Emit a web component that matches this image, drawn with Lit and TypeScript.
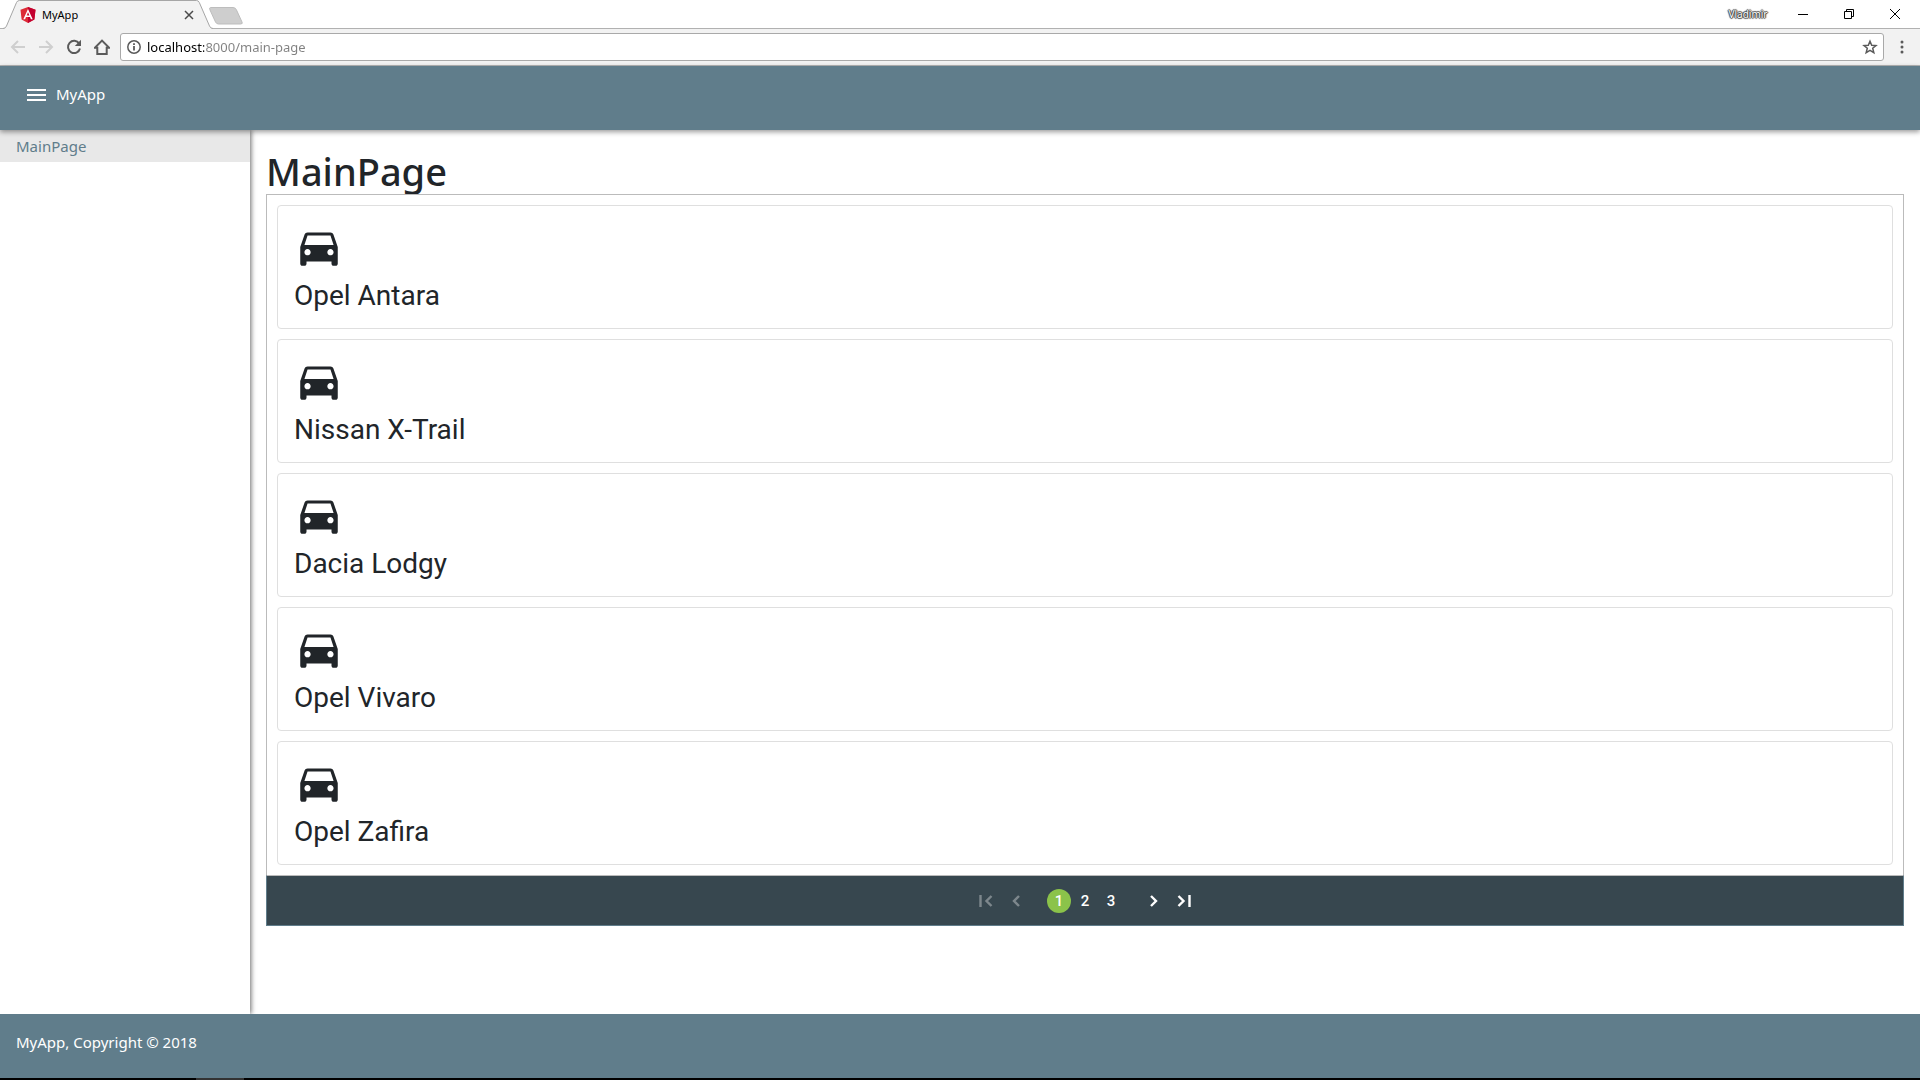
import { LitElement, html, css, svg } from "lit";
import { customElement, property, state } from "lit/decorators.js";
import { classMap } from "lit/directives/class-map.js";

const ui = css`
  :host { display: block; box-sizing: border-box; }
  *, *::before, *::after { box-sizing: border-box; }
  button { margin: 0; padding: 0; border: 0; background: none; color: inherit; font: inherit; cursor: pointer; display: flex; align-items: center; justify-content: center; }
  button:disabled { cursor: default; }
  svg { display: block; flex: none; }
`;

@customElement("browser-chrome")
class BrowserChrome extends LitElement {
  static styles = [ui, css`
    :host { font-family: "Noto Sans", "Open Sans", sans-serif; background: #f2f2f2; color: #5a5a5a; }
    .strip { display: flex; height: 29px; padding-right: 2px; background: #fff; border-bottom: 1px solid #b1b1b1; }
    .tab { position: relative; display: flex; align-items: center; width: 213px; height: 29px; padding: 0 15px 0 20px; gap: 6px; }
    .shape { position: absolute; left: 0; top: 0; }
    .logo, .title, .close { position: relative; }
    .title { flex: 1; font-size: 11px; line-height: 16px; color: #000; }
    .close { width: 18px; height: 18px; }
    .fresh { align-self: flex-start; height: 29px; margin-left: -7px; }
    .space { flex: 1; }
    .user { width: 64px; font-size: 10px; color: #fff; text-shadow: 0 0 1px #333, 0 0 1px #333, 1px 0 1px #555, -1px 0 1px #555, 0 1px 1px #555, 0 -1px 1px #555; }
    .win { width: 46px; color: #000; height: 27px; }
    .bar { display: flex; align-items: center; height: 37px; padding: 0 8px 0 4px; border-bottom: 1px solid #b6b6b6; }
    .nav { width: 28px; height: 28px; }
    .nav:disabled { color: #cfcfcf; }
    .box { flex: 1; display: flex; align-items: center; height: 28px; margin-left: 4px; padding: 0 5px 0 6px; gap: 6px; background: #fff; border: 1px solid #a9a9a9; border-radius: 3px; }
    .address { flex: 1; min-width: 0; height: 24px; padding: 0; border: 0; outline: 0; font: 13px/24px "Noto Sans", "Open Sans", sans-serif; color: #000; -webkit-text-fill-color: transparent; background: linear-gradient(to right, #000 57px, #808080 57px); -webkit-background-clip: text; background-clip: text; }
    .more { width: 20px; height: 28px; margin-left: 8px; }
  `];
  render() {
    return html`
      <div class="strip">
        <div class="tab">
          <svg class="shape" width="213" height="29" viewBox="0 0 213 29"><path d="M3 29Q5.500 28.500 6.500 26L16.500 2.500Q17.300.5 19.500.5H196.500Q198.500.5 199.300 2.500L209.500 26Q210.500 28.500 213 29Z" fill="#f2f2f2"/><path d="M3 28.500Q5.500 28.500 6.500 26L16.500 2.500Q17.300.5 19.500.5H196.500Q198.500.5 199.300 2.500L209.500 26Q210.500 28.500 213 28.500" fill="none" stroke="#a6a6a6"/></svg>
          <svg class="logo" width="16" height="16" viewBox="0 0 16 16"><path d="M8 0 .5 2.700 1.600 12.500 8 16l6.400-3.500 1.100-9.800Z" fill="#dd2c36"/><path d="M8 0v16l6.400-3.500 1.100-9.800Z" fill="#c3002f"/><path d="M8 1.900 3.300 12.300h1.800l.9-2.400h4l.9 2.400h1.800Zm0 3.300 1.400 3.300H6.600Z" fill="#fff"/></svg>
          <span class="title">MyApp</span>
          <button class="close" aria-label="Close tab"><svg width="10" height="10" viewBox="0 0 10 10" stroke="#4a4a4a" stroke-width="1.500"><path d="M1 1l8 8M9 1 1 9"/></svg></button>
        </div>
        <button class="fresh" aria-label="New tab"><svg width="40" height="29" viewBox="0 0 40 29"><path d="M4.500 7.500H27Q29.500 7.500 30.500 10L36 22Q37 24 34.500 24H12.500Q10.500 24 9.500 22L4 10Q3 7.500 4.500 7.500Z" fill="#cecece" stroke="#bdbdbd"/></svg></button>
        <span class="space"></span>
        <button class="user">Vladimir</button>
        <button class="win" aria-label="Minimize"><svg width="10" height="10" viewBox="0 0 10 10" stroke="currentColor"><path d="M0 5.500H10"/></svg></button>
        <button class="win" aria-label="Restore"><svg width="10" height="10" viewBox="0 0 10 10" fill="none" stroke="currentColor"><path d="M.5 2.500h7v7h-7ZM2.500 2.500v-2h7v7h-2"/></svg></button>
        <button class="win" aria-label="Close"><svg width="10" height="10" viewBox="0 0 10 10" stroke="currentColor"><path d="M0 0 10 10M10 0 0 10"/></svg></button>
      </div>
      <div class="bar">
        <button class="nav" aria-label="Back" disabled><svg width="16" height="16" viewBox="0 0 16 16" fill="none" stroke="currentColor" stroke-width="2"><path d="M15 8H2.500M8 2 2 8l6 6"/></svg></button>
        <button class="nav" aria-label="Forward" disabled><svg width="16" height="16" viewBox="0 0 16 16" fill="none" stroke="currentColor" stroke-width="2"><path d="M1 8h12.500M8 2l6 6-6 6"/></svg></button>
        <button class="nav" aria-label="Reload"><svg width="16" height="16" viewBox="0 0 16 16" fill="none" stroke="currentColor" stroke-width="2"><path d="M13.200 4.600A6.100 6.100 0 1 0 14 9.500"/><path d="M15 .8V7H8.800Z" fill="currentColor" stroke="none"/></svg></button>
        <button class="nav" aria-label="Home"><svg width="16" height="16" viewBox="0 0 16 16" fill="none" stroke="currentColor" stroke-width="2"><path d="M.8 8.800H3.300V15h9.400V8.800h2.500L8 1.600Z"/></svg></button>
        <div class="box">
          <svg width="14" height="14" viewBox="0 0 14 14" fill="none" stroke="#5a5a5a" stroke-width="1.500"><circle cx="7" cy="7" r="6.200"/><path d="M7 6v4.500M7 3.200v1.700" stroke-width="1.800"/></svg>
          <input class="address" aria-label="Address" value="localhost:8000/main-page" />
          <button aria-label="Bookmark this page"><svg width="16" height="16" viewBox="0 0 16 16" fill="none" stroke="currentColor" stroke-width="1.500"><path d="M8 2.200 9.700 6.200 14 6.500 10.700 9.300 11.800 13.600 8 11.300 4.200 13.600 5.300 9.300 2 6.500 6.300 6.200Z"/></svg></button>
        </div>
        <button class="more" aria-label="Menu"><svg width="4" height="14" viewBox="0 0 4 14" fill="currentColor"><circle cx="2" cy="2" r="1.500"/><circle cx="2" cy="7" r="1.500"/><circle cx="2" cy="12" r="1.500"/></svg></button>
      </div>`;
  }
}

@customElement("car-card")
class CarCard extends LitElement {
  @property() name = "";
  static styles = [ui, css`
    :host { display: flex; flex-direction: column; gap: 8px; padding: 16px; border: 1px solid #dfdfdf; border-radius: 4px; color: #212529; }
    .name { margin: 0; font: 400 28px/32px Roboto, sans-serif; }
  `];
  render() {
    return html`
      <svg width="50" height="50" viewBox="0 0 24 24" fill="currentColor" aria-hidden="true"><path d="M18.920 6.010C18.720 5.420 18.160 5 17.500 5h-11c-.66 0-1.210.42-1.420 1.010L3 12v8c0 .55.45 1 1 1h1c.55 0 1-.45 1-1v-1h12v1c0 .55.45 1 1 1h1c.55 0 1-.45 1-1v-8l-2.080-5.990zM6.500 16c-.83 0-1.500-.67-1.500-1.500S5.670 13 6.500 13s1.500.67 1.500 1.500S7.330 16 6.500 16zm11 0c-.83 0-1.500-.67-1.500-1.500s.67-1.500 1.500-1.500 1.500.67 1.500 1.500-.67 1.500-1.500 1.500zM5 11l1.500-4.500h11L19 11H5z"/></svg>
      <p class="name">${this.name}</p>`;
  }
}

@customElement("page-pager")
class PagePager extends LitElement {
  @state() page = 1;
  static styles = [ui, css`
    .pager { display: flex; align-items: center; justify-content: center; height: 51px; background: #37474f; border: 1px solid #607d8b; border-top-color: #bbb; color: #fff; font: 500 15px/24px Roboto, sans-serif; }
    .pages { display: flex; gap: 2px; margin: 0 16px; }
    .page { width: 24px; height: 24px; border-radius: 50%; }
    .active { background: #8bc34a; }
    .step { width: 30px; height: 32px; }
    .step:disabled { opacity: 0.35; }
  `];
  step(label: string, shape: unknown, target: number, off: boolean) {
    return html`<button class="step" aria-label=${label} ?disabled=${off} @click=${() => (this.page = target)}>
      <svg width="14" height="12" viewBox="0 0 14 12" fill="none" stroke="currentColor" stroke-width="2.400">${shape}</svg>
    </button>`;
  }
  render() {
    const p = this.page;
    return html`<nav class="pager" aria-label="Pages">
      ${this.step("First page", svg`<path d="M1.500 0V12M12.500 1 7.500 6l5 5"/>`, 1, p === 1)}
      ${this.step("Previous page", svg`<path d="M10 1 5 6l5 5"/>`, p - 1, p === 1)}
      <div class="pages">
        ${[1, 2, 3].map((n) => html`<button class=${classMap({ page: true, active: n === p })} @click=${() => (this.page = n)}>${n}</button>`)}
      </div>
      ${this.step("Next page", svg`<path d="M4 1 9 6 4 11"/>`, p + 1, p === 3)}
      ${this.step("Last page", svg`<path d="M12.500 0V12M1.500 1 6.500 6l-5 5"/>`, 3, p === 3)}
    </nav>`;
  }
}

@customElement("app-root")
class AppRoot extends LitElement {
  static styles = [ui, css`
    :host { display: flex; flex-direction: column; min-height: 100vh; background: #fff; font: 15px/24px "Noto Sans", "Open Sans", sans-serif; color: #212529; }
    .header { position: relative; z-index: 2; height: 64px; padding: 16px 25px; background: #607d8b; color: #fff; box-shadow: 0 2px 5px rgba(0, 0, 0, 0.4); display: flex; align-items: flex-start; gap: 9px; }
    .menu { width: 22px; height: 26px; }
    .body { flex: 1; display: flex; }
    .side { width: 250px; box-shadow: 1px 0 5px rgba(0, 0, 0, 0.6); }
    .link { display: block; padding: 4px 16px; background: #e8e8e8; color: #607d8b; text-decoration: none; }
    .main { flex: 1; padding: 16px; }
    .heading { margin: 0; padding-top: 2px; font-weight: 500; font-size: 38px; line-height: 46px; }
    .list { position: relative; display: flex; flex-direction: column; gap: 10px; padding: 10px; background: #fff; border: 1px solid #bbb; border-bottom: 0; }
    .footer { position: relative; z-index: 1; height: 64px; padding: 16px; background: #607d8b; color: #fff; }
    .taskbar { height: 2px; padding-left: 196px; background: #000; }
    .task { width: 48px; height: 2px; background: #333; }
  `];
  cars = ["Opel Antara", "Nissan X-Trail", "Dacia Lodgy", "Opel Vivaro", "Opel Zafira"];
  render() {
    return html`
      <browser-chrome></browser-chrome>
      <header class="header">
        <button class="menu" aria-label="Toggle menu"><svg width="19" height="12" viewBox="0 0 19 12" fill="currentColor"><path d="M0 0H19V2H0ZM0 5H19V7H0ZM0 10H19V12H0Z"/></svg></button>
        <span class="brand">MyApp</span>
      </header>
      <div class="body">
        <nav class="side"><a class="link" href="#main-page">MainPage</a></nav>
        <main class="main">
          <h1 class="heading">MainPage</h1>
          <div class="list">${this.cars.map((c) => html`<car-card .name=${c}></car-card>`)}</div>
          <page-pager></page-pager>
        </main>
      </div>
      <footer class="footer">MyApp, Copyright © 2018</footer>
      <div class="taskbar"><div class="task"></div></div>`;
  }
}
